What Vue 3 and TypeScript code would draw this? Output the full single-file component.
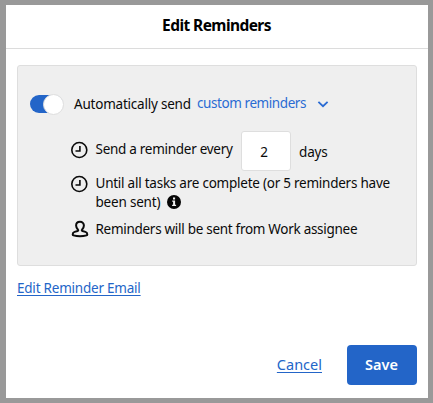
<script setup lang="ts">
import { ref } from 'vue'

const enabled = ref(true)
const days = ref('2')
</script>

<template>
  <div class="backdrop">
    <section class="modal" role="dialog">
      <header class="header"><h1 class="title">Edit Reminders</h1></header>
      <main class="body">
        <div class="panel">
          <div class="auto-row">
            <button class="toggle" :class="{ on: enabled }" role="switch" :aria-checked="enabled" @click="enabled = !enabled"><span class="knob"></span></button>
            <span class="auto-label">Automatically send</span>
            <button class="select">
              <span class="select-label">custom reminders</span>
              <svg class="chevron" viewBox="0 0 12 8"><path d="M1.4 1.8 6 6.2 10.6 1.8" /></svg>
            </button>
          </div>
          <div class="row every">
            <svg class="icon" viewBox="0 0 18 18"><circle cx="9.3" cy="9" r="7.5" /><path d="M9.9 5v5H5.5" /></svg>
            <span class="t-send">Send a reminder every</span>
            <input v-model="days" class="days" />
            <span class="t-days">days</span>
          </div>
          <div class="row until">
            <svg class="icon" viewBox="0 0 18 18"><circle cx="9.3" cy="9" r="7.5" /><path d="M9.9 5v5H5.5" /></svg>
            <div class="lines">
              <div class="t-until">Until all tasks are complete (or 5 reminders have</div>
              <div class="second">
                <span class="t-been">been sent)</span>
                <svg class="info" viewBox="0 0 14 14"><circle cx="7" cy="7" r="7" /><path d="M5.2 5.5h2.9v4.3h1v1.3H5.1V9.8h1V6.8h-.9zM6 2.5h2.1v1.9H6z" /></svg>
              </div>
            </div>
          </div>
          <div class="row from">
            <svg class="icon person" viewBox="0 0 18 18"><path d="M9 1.8c-2.4 0-3.9 1.6-3.9 3.8 0 1.7.7 3 1.9 4.2.4.5.2 1-.4 1.2l-3 .9c-1.3.4-1.9 1.4-1.9 2.6 0 .5.3.8.7.9 4 1 9.2 1 13.2 0 .4-.1.7-.4.7-.9 0-1.2-.6-2.2-1.9-2.6l-3-.9c-.6-.2-.8-.7-.4-1.2 1.2-1.2 1.9-2.5 1.9-4.2 0-2.2-1.5-3.8-3.9-3.8z" /></svg>
            <span class="t-from">Reminders will be sent from Work assignee</span>
          </div>
        </div>
        <a class="edit-link" href="#">Edit Reminder Email</a>
      </main>
      <footer class="footer">
        <a class="cancel" href="#">Cancel</a>
        <button class="save">Save</button>
      </footer>
    </section>
  </div>
</template>

<style>
body {
  margin: 0;
  overflow: hidden;
}
</style>

<style scoped>
* {
  box-sizing: border-box;
}
.backdrop {
  height: 403px;
  padding: 5px 5px 5px 6px;
  background: #999;
  font: 13.5px/20px "Noto Sans", sans-serif;
  color: #0a0a0a;
  white-space: nowrap;
}
.modal {
  height: 393px;
  display: flex;
  flex-direction: column;
  background: #fff;
}
.header {
  height: 44px;
  flex: none;
  display: flex;
  justify-content: center;
  padding: 9px 1px 0 0;
  border-bottom: 1px solid #dcdcdc;
}
.title {
  margin: 0;
  font-size: 15.5px;
  line-height: 22px;
  font-weight: 700;
  color: #000;
  letter-spacing: -0.57px;
}
.body {
  padding: 16px 11px 0;
  flex: 1;
}
.panel {
  height: 201px;
  padding: 23px 0 0 12px;
  background: #efefef;
  border: 1px solid #dedede;
  border-radius: 3px;
}
button {
  border: 0;
  padding: 0;
  background: none;
  font: inherit;
}
.auto-row {
  height: 30px;
  display: flex;
  align-items: center;
}
.toggle {
  display: flex;
  align-items: center;
  width: 33px;
  height: 18px;
  margin-right: 11px;
  border-radius: 9px;
  background: #999;
}
.toggle.on {
  justify-content: flex-end;
  background: #2365c8;
}
.knob {
  width: 21px;
  height: 21px;
  flex: none;
  margin-right: -1px;
  border-radius: 50%;
  background: #fff;
  border: 1px solid #dedede;
}
.auto-label {
  width: 123px;
  letter-spacing: -0.22px;
}
.select {
  display: flex;
  align-items: center;
  color: #2a6bd3;
}
.select-label {
  width: 120px;
  text-align: left;
  letter-spacing: -0.42px;
  transform: translateY(-1px);
}
.chevron {
  width: 12px;
  height: 8px;
  fill: none;
  stroke: #2a6bd3;
  stroke-width: 1.8;
}
.row {
  display: flex;
  padding-left: 40px;
}
.icon {
  width: 18px;
  height: 18px;
  margin: 1px 7.5px 0 0;
  flex: none;
  fill: none;
  stroke: #0a0a0a;
  stroke-width: 1.6;
}
.every {
  height: 40px;
  margin-top: 12px;
  align-items: center;
}
.every .icon,
.t-send {
  transform: translateY(-2px);
}
.t-send {
  width: 145.5px;
  letter-spacing: -0.28px;
}
.days {
  width: 50px;
  height: 40px;
  margin-right: 8px;
  padding: 2px 4px 0 0;
  text-align: center;
  font: inherit;
  color: inherit;
  background: #fff;
  border: 1px solid #dedede;
  border-radius: 3px;
}
.t-days {
  letter-spacing: -0.15px;
  transform: translateY(1px);
}
.until {
  margin-top: 3px;
}
.until .icon {
  margin-top: 0.5px;
}
.lines {
  line-height: 19px;
}
.t-until {
  letter-spacing: -0.24px;
}
.second {
  display: flex;
  align-items: center;
}
.t-been {
  width: 71.5px;
  letter-spacing: -0.2px;
}
.info {
  width: 14px;
  height: 14px;
  margin-top: -1px;
  fill: #050505;
}
.info path {
  fill: #efefef;
}
.from {
  margin-top: 7px;
}
.icon.person {
  margin-left: 1px;
  margin-right: 6.5px;
  stroke-width: 2;
}
.t-from {
  letter-spacing: -0.29px;
}
.edit-link {
  display: inline-block;
  margin-top: 12px;
  color: #2365c8;
  letter-spacing: -0.22px;
  text-underline-offset: 2px;
}
.footer {
  display: flex;
  justify-content: flex-end;
  align-items: center;
  height: 66px;
  flex: none;
  padding-right: 11px;
}
.cancel {
  margin: -2px 25px 0 0;
  color: #2365c8;
  font-size: 14.5px;
  text-underline-offset: 2px;
}
.save {
  width: 70px;
  height: 40px;
  padding: 0 1px 2px 0;
  border-radius: 4px;
  background: #2365c8;
  color: #fff;
  font-size: 14.5px;
  font-weight: 600;
}
</style>
